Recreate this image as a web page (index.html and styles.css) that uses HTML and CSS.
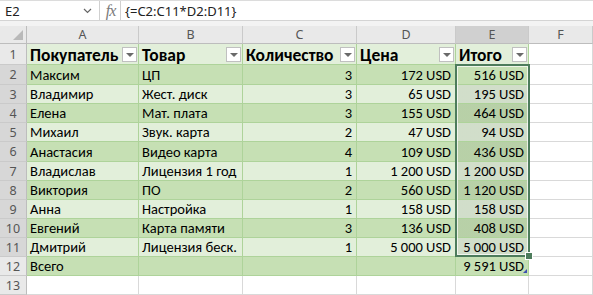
FILE: index.html
```html
<!DOCTYPE html>
<html lang="ru">
<head>
<meta charset="utf-8">
<link rel="stylesheet" href="styles.css">
</head>
<body>
<div class="fbar">
  <div class="namebox"><span>E2</span><svg class="chev" width="9" height="6" viewBox="0 0 9 6"><path d="M1 1 L4.5 4.5 L8 1" fill="none" stroke="#666" stroke-width="1.2"/></svg></div>
  <div class="fxsep"></div>
  <div class="fx">fx</div>
  <div class="formula">{=C2:C11*D2:D11}</div>
</div>
<div class="strip"></div>
<div class="sheet">
  <div class="corner"><span class="tri"></span></div>
  <div class="ch">A</div><div class="ch">B</div><div class="ch">C</div><div class="ch">D</div><div class="ch csel">E</div><div class="ch">F</div>

  <div class="rh">1</div>
  <div class="c th lt">Покупатель<span class="dd"></span></div>
  <div class="c th lt">Товар<span class="dd"></span></div>
  <div class="c th lt">Количество<span class="dd"></span></div>
  <div class="c th lt">Цена<span class="dd"></span></div>
  <div class="c th lt">Итого<span class="dd"></span></div>
  <div class="c"></div>

  <div class="rh rsel">2</div>
  <div class="c dk">Максим</div><div class="c dk">ЦП</div><div class="c dk n">3</div><div class="c dk n">172 USD</div><div class="c dk n">516 USD</div><div class="c"></div>

  <div class="rh rsel">3</div>
  <div class="c lt">Владимир</div><div class="c lt">Жест. диск</div><div class="c lt n">3</div><div class="c lt n">65 USD</div><div class="c lt n sel">195 USD</div><div class="c"></div>

  <div class="rh rsel">4</div>
  <div class="c dk">Елена</div><div class="c dk">Мат. плата</div><div class="c dk n">3</div><div class="c dk n">155 USD</div><div class="c dk n sel">464 USD</div><div class="c"></div>

  <div class="rh rsel">5</div>
  <div class="c lt">Михаил</div><div class="c lt">Звук. карта</div><div class="c lt n">2</div><div class="c lt n">47 USD</div><div class="c lt n sel">94 USD</div><div class="c"></div>

  <div class="rh rsel">6</div>
  <div class="c dk">Анастасия</div><div class="c dk">Видео карта</div><div class="c dk n">4</div><div class="c dk n">109 USD</div><div class="c dk n sel">436 USD</div><div class="c"></div>

  <div class="rh rsel">7</div>
  <div class="c lt">Владислав</div><div class="c lt">Лицензия 1 год</div><div class="c lt n">1</div><div class="c lt n">1 200 USD</div><div class="c lt n sel">1 200 USD</div><div class="c"></div>

  <div class="rh rsel">8</div>
  <div class="c dk">Виктория</div><div class="c dk">ПО</div><div class="c dk n">2</div><div class="c dk n">560 USD</div><div class="c dk n sel">1 120 USD</div><div class="c"></div>

  <div class="rh rsel">9</div>
  <div class="c lt">Анна</div><div class="c lt">Настройка</div><div class="c lt n">1</div><div class="c lt n">158 USD</div><div class="c lt n sel">158 USD</div><div class="c"></div>

  <div class="rh rsel">10</div>
  <div class="c dk">Евгений</div><div class="c dk">Карта памяти</div><div class="c dk n">3</div><div class="c dk n">136 USD</div><div class="c dk n sel">408 USD</div><div class="c"></div>

  <div class="rh rsel">11</div>
  <div class="c lt">Дмитрий</div><div class="c lt">Лицензия беск.</div><div class="c lt n">1</div><div class="c lt n">5 000 USD</div><div class="c lt n sel">5 000 USD</div><div class="c"></div>

  <div class="rh">12</div>
  <div class="c dk">Всего</div><div class="c dk"></div><div class="c dk"></div><div class="c dk"></div><div class="c dk n total">9 591 USD<span class="resize"></span></div><div class="c"></div>

  <div class="rh">13</div>
  <div class="c"></div><div class="c"></div><div class="c"></div><div class="c"></div><div class="c"></div><div class="c"></div>

  <div class="selection"><span class="handle"></span></div>
</div>
</body>
</html>
```
FILE: styles.css
```css
html, body {
  margin: 0;
  padding: 0;
  background: #ffffff;
}
body {
  width: 593px;
  height: 295px;
  overflow: hidden;
  font-family: Carlito, Lato, "Liberation Sans", sans-serif;
}
.fbar {
  display: flex;
  height: 21px;
  box-sizing: border-box;
  border-top: 1px solid #dcdcdc;
  border-bottom: 1px solid #d4d4d4;
  background: #ffffff;
}
.namebox {
  width: 100px;
  display: flex;
  align-items: center;
  justify-content: space-between;
  padding: 0 7px 0 5px;
  box-sizing: border-box;
  font-family: "Noto Sans", "Open Sans", sans-serif;
  font-size: 13px;
  color: #222;
  border-right: 1px solid #d0d0d0;
}
.fxsep {
  width: 1px;
}
.fx {
  width: 20px;
  box-sizing: border-box;
  border-right: 1px solid #d0d0d0;
  font-family: "Liberation Serif", serif;
  font-style: italic;
  font-size: 16px;
  color: #7a7a7a;
  display: flex;
  align-items: center;
  justify-content: center;
  letter-spacing: -1px;
}
.formula {
  flex: 1;
  padding-left: 4px;
  display: flex;
  align-items: center;
  font-family: "Noto Sans", "Open Sans", sans-serif;
  font-size: 13px;
  color: #222;
}
.strip {
  height: 5px;
  background: #f3f3f3;
}
.sheet {
  position: relative;
  display: grid;
  grid-template-columns: 27px 112px 104px 114px 99px 73px 64px;
  grid-template-rows: 18px 21px 20px 19px 19px 19px 20px 19px 19px 19px 19px 19px 19px 19px;
}
.sheet > div {
  box-sizing: border-box;
}
.corner {
  background: #e9e9e9;
  border-right: 1px solid #bdbdbd;
  border-bottom: 1px solid #bdbdbd;
  position: relative;
}
.tri {
  position: absolute;
  right: 3px;
  bottom: 3px;
  width: 0;
  height: 0;
  border-left: 10px solid transparent;
  border-bottom: 10px solid #b9b9b9;
}
.ch {
  background: #e9e9e9;
  border-right: 1px solid #cacaca;
  border-bottom: 1px solid #bdbdbd;
  font-family: "Noto Sans", "Open Sans", sans-serif;
  font-size: 12.5px;
  color: #555;
  display: flex;
  align-items: center;
  justify-content: center;
}
.csel {
  background: #d0d0d0;
}
.rh {
  background: #e9e9e9;
  border-right: 1px solid #bdbdbd;
  border-bottom: 1px solid #cacaca;
  font-family: "Noto Sans", "Open Sans", sans-serif;
  font-size: 12.5px;
  color: #555;
  display: flex;
  align-items: center;
  justify-content: center;
}
.rsel {
  background: #d7d7d7;
}
.c {
  border-right: 1px solid #d9d9d9;
  border-bottom: 1px solid #d9d9d9;
  font-size: 14.5px;
  color: #000;
  display: flex;
  align-items: center;
  padding: 0 3px;
  white-space: nowrap;
  overflow: hidden;
  position: relative;
}
.dk {
  background: #c6e0b4;
  border-right-color: #aed39a;
  border-bottom-color: #aed39a;
}
.lt {
  background: #e2efda;
  border-right-color: #aed39a;
  border-bottom-color: #aed39a;
}
.th {
  font-weight: bold;
  font-size: 17.5px;
  justify-content: space-between;
  padding-right: 1px;
  padding-top: 1px;
}
.dd {
  width: 15px;
  height: 15px;
  box-sizing: border-box;
  background: #ffffff;
  border: 1px solid #c0c0c0;
  display: flex;
  align-items: center;
  justify-content: center;
  flex: none;
}
.dd::after {
  content: "";
  width: 0;
  height: 0;
  border-left: 4px solid transparent;
  border-right: 4px solid transparent;
  border-top: 4px solid #6a6a6a;
  margin-top: 1px;
}
.n {
  justify-content: flex-end;
  padding-right: 4px;
}
.sel {
  background-image: linear-gradient(rgba(40, 50, 40, 0.09), rgba(40, 50, 40, 0.09));
}
.resize {
  position: absolute;
  right: 1px;
  bottom: 2px;
  width: 0;
  height: 0;
  border-left: 4px solid transparent;
  border-bottom: 4px solid #3b4fb0;
}
.selection {
  position: absolute;
  left: 455px;
  top: 38px;
  width: 75px;
  height: 193px;
  box-sizing: border-box;
  border: 2px solid #4d7c5c;
  box-shadow: inset 0 0 0 1px rgba(255, 255, 255, 0.7);
  pointer-events: none;
}
.handle {
  position: absolute;
  right: -5px;
  bottom: -5px;
  width: 6px;
  height: 6px;
  background: #4d7c5c;
  border: 1px solid #ffffff;
}
```
